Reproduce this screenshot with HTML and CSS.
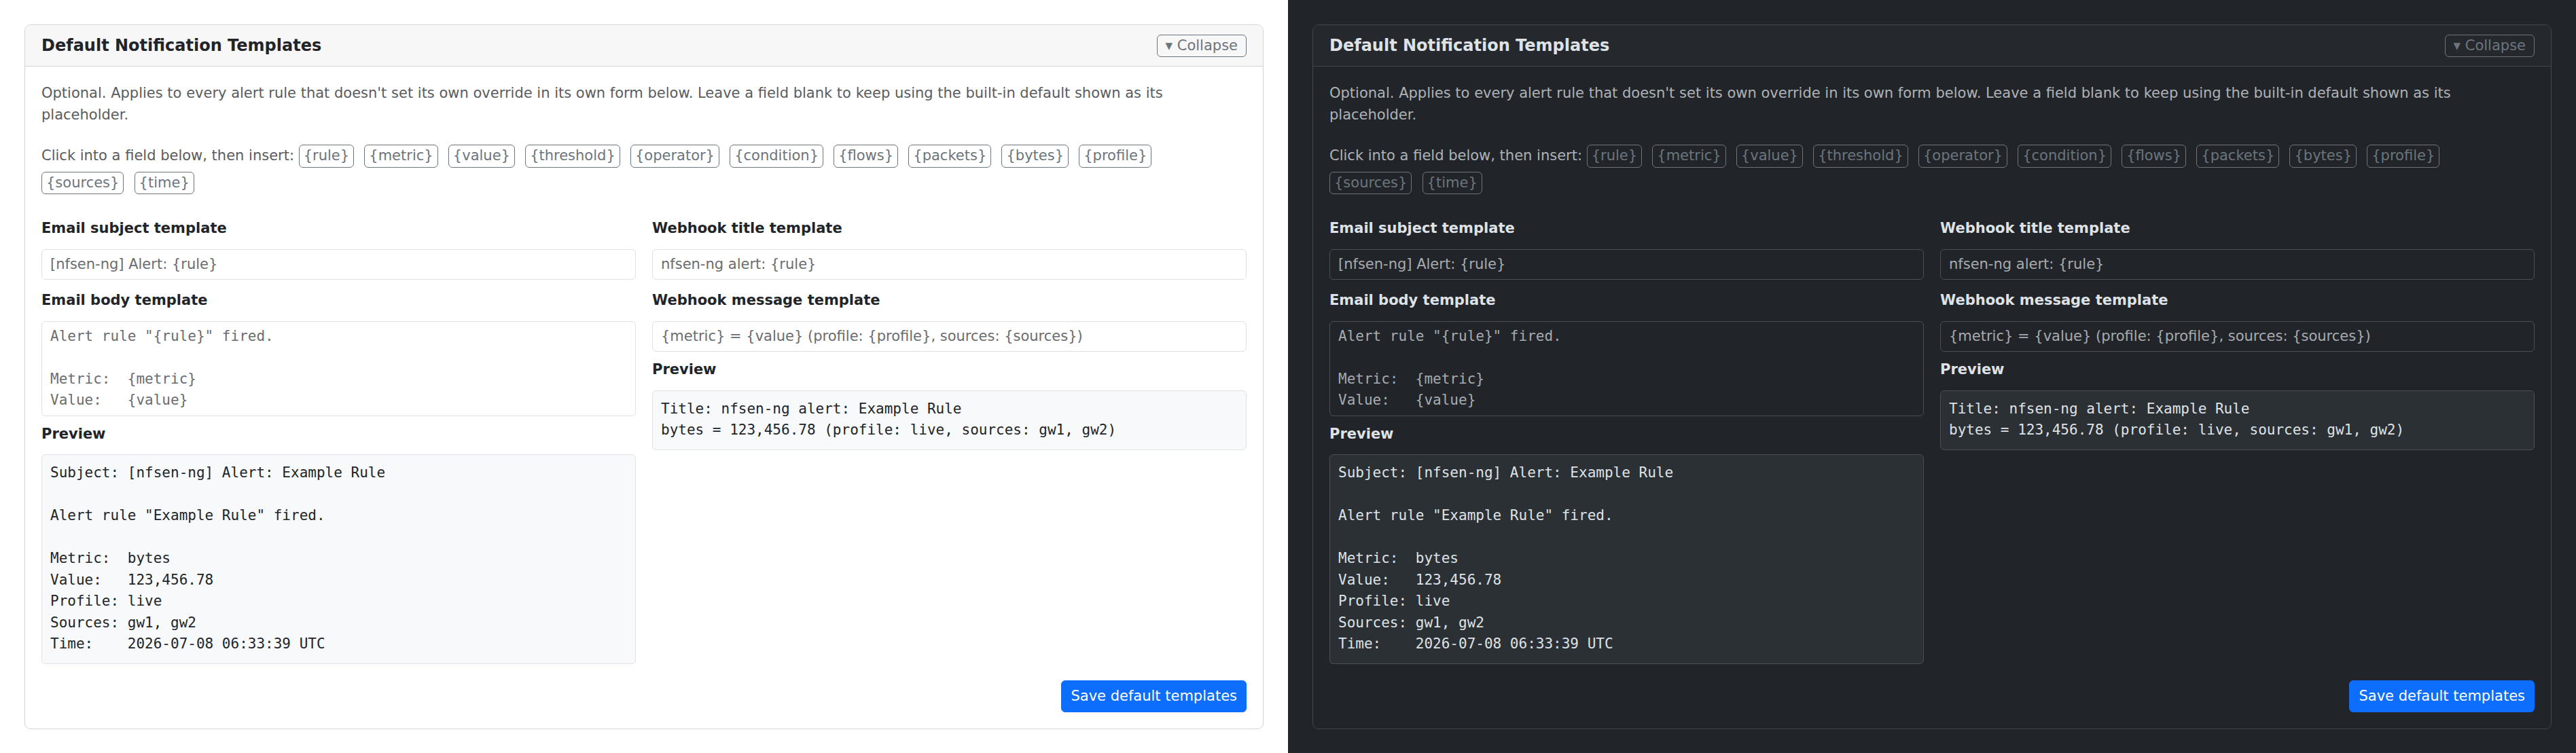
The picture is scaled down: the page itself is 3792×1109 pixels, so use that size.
FILE: index.html
```html
<!DOCTYPE html>
<html lang="en">
<head>
<meta charset="utf-8">
<title>Default Notification Templates</title>
<link rel="stylesheet" href="styles.css">
</head>
<body>
<div class="split">
  <section class="pane theme-light">
    <div class="card">
      <div class="card-header">
        <h5 class="card-title">Default Notification Templates</h5>
        <button class="btn-collapse" type="button">&#9662; Collapse</button>
      </div>
      <div class="card-body">
        <p class="intro">Optional. Applies to every alert rule that doesn't set its own override in its own form below. Leave a field blank to keep using the built-in default shown as its placeholder.</p>
        <div class="vars">Click into a field below, then insert: <button class="chip" type="button">{rule}</button> <button class="chip" type="button">{metric}</button> <button class="chip" type="button">{value}</button> <button class="chip" type="button">{threshold}</button> <button class="chip" type="button">{operator}</button> <button class="chip" type="button">{condition}</button> <button class="chip" type="button">{flows}</button> <button class="chip" type="button">{packets}</button> <button class="chip" type="button">{bytes}</button> <button class="chip" type="button">{profile}</button> <button class="chip" type="button">{sources}</button> <button class="chip" type="button">{time}</button></div>
        <div class="grid">
          <div class="col">
            <label class="label">Email subject template</label>
            <input class="control" type="text" placeholder="[nfsen-ng] Alert: {rule}">
            <label class="label">Email body template</label>
            <textarea class="control mono area" rows="4" placeholder="Alert rule &quot;{rule}&quot; fired.&#10;&#10;Metric:  {metric}&#10;Value:   {value}"></textarea>
            <div class="label label-preview">Preview</div>
            <pre class="preview">Subject: [nfsen-ng] Alert: Example Rule

Alert rule "Example Rule" fired.

Metric:  bytes
Value:   123,456.78
Profile: live
Sources: gw1, gw2
Time:    2026-07-08 06:33:39 UTC</pre>
          </div>
          <div class="col">
            <label class="label">Webhook title template</label>
            <input class="control" type="text" placeholder="nfsen-ng alert: {rule}">
            <label class="label">Webhook message template</label>
            <input class="control" type="text" placeholder="{metric} = {value} (profile: {profile}, sources: {sources})">
            <div class="label label-preview">Preview</div>
            <pre class="preview">Title: nfsen-ng alert: Example Rule
bytes = 123,456.78 (profile: live, sources: gw1, gw2)</pre>
          </div>
        </div>
        <div class="actions"><button class="btn-primary" type="button">Save default templates</button></div>
      </div>
    </div>
    <div class="card card-next"></div>
  </section>
  <section class="pane theme-dark">
    <div class="card">
      <div class="card-header">
        <h5 class="card-title">Default Notification Templates</h5>
        <button class="btn-collapse" type="button">&#9662; Collapse</button>
      </div>
      <div class="card-body">
        <p class="intro">Optional. Applies to every alert rule that doesn't set its own override in its own form below. Leave a field blank to keep using the built-in default shown as its placeholder.</p>
        <div class="vars">Click into a field below, then insert: <button class="chip" type="button">{rule}</button> <button class="chip" type="button">{metric}</button> <button class="chip" type="button">{value}</button> <button class="chip" type="button">{threshold}</button> <button class="chip" type="button">{operator}</button> <button class="chip" type="button">{condition}</button> <button class="chip" type="button">{flows}</button> <button class="chip" type="button">{packets}</button> <button class="chip" type="button">{bytes}</button> <button class="chip" type="button">{profile}</button> <button class="chip" type="button">{sources}</button> <button class="chip" type="button">{time}</button></div>
        <div class="grid">
          <div class="col">
            <label class="label">Email subject template</label>
            <input class="control" type="text" placeholder="[nfsen-ng] Alert: {rule}">
            <label class="label">Email body template</label>
            <textarea class="control mono area" rows="4" placeholder="Alert rule &quot;{rule}&quot; fired.&#10;&#10;Metric:  {metric}&#10;Value:   {value}"></textarea>
            <div class="label label-preview">Preview</div>
            <pre class="preview">Subject: [nfsen-ng] Alert: Example Rule

Alert rule "Example Rule" fired.

Metric:  bytes
Value:   123,456.78
Profile: live
Sources: gw1, gw2
Time:    2026-07-08 06:33:39 UTC</pre>
          </div>
          <div class="col">
            <label class="label">Webhook title template</label>
            <input class="control" type="text" placeholder="nfsen-ng alert: {rule}">
            <label class="label">Webhook message template</label>
            <input class="control" type="text" placeholder="{metric} = {value} (profile: {profile}, sources: {sources})">
            <div class="label label-preview">Preview</div>
            <pre class="preview">Title: nfsen-ng alert: Example Rule
bytes = 123,456.78 (profile: live, sources: gw1, gw2)</pre>
          </div>
        </div>
        <div class="actions"><button class="btn-primary" type="button">Save default templates</button></div>
      </div>
    </div>
    <div class="card card-next"></div>
  </section>
</div>
</body>
</html>
```
FILE: styles.css
```css
html, body {
  margin: 0;
  padding: 0;
  height: 100%;
  overflow: hidden;
}

body {
  font-family: "DejaVu Sans", sans-serif;
  font-size: 24px;
  line-height: 1.5;
}

.split {
  display: flex;
  width: 3792px;
  height: 1109px;
}

.theme-light {
  --bg: #ffffff;
  --text: #212529;
  --muted: #595c5f;
  --card-border: #d5d5d6;
  --cap-bg: #f7f7f7;
  --input-bg: #ffffff;
  --input-border: #dee2e6;
  --placeholder: #6a6d70;
  --preview-bg: #f8f9fa;
  --preview-border: #dee2e6;
  --chip: #6c757d;
}

.theme-dark {
  --bg: #212529;
  --text: #dee2e6;
  --muted: #aeb2b6;
  --card-border: #41464b;
  --cap-bg: #25292d;
  --input-bg: #212529;
  --input-border: #495057;
  --placeholder: #a7abaf;
  --preview-bg: #2b3035;
  --preview-border: #495057;
  --chip: #6c757d;
}

.pane {
  width: 1896px;
  flex: 0 0 1896px;
  box-sizing: border-box;
  padding: 36px 36px 0 36px;
  background: var(--bg);
  color: var(--text);
  overflow: hidden;
}

.card {
  border: 1px solid var(--card-border);
  border-radius: 9px;
  background: var(--bg);
  overflow: hidden;
}

.card-next {
  margin-top: 35px;
  height: 200px;
}

.card-header {
  display: flex;
  align-items: center;
  justify-content: space-between;
  padding: 14px 24px 13px 24px;
  background: var(--cap-bg);
  border-bottom: 1px solid var(--card-border);
}

.card-title {
  margin: 0;
  font-size: 24px;
  font-weight: 700;
  line-height: 1.2;
  color: var(--text);
}

.btn-collapse {
  font-family: "DejaVu Sans", sans-serif;
  font-size: 21px;
  line-height: 25px;
  padding: 3px 12px;
  color: var(--chip);
  background: transparent;
  border: 1px solid var(--chip);
  border-radius: 6px;
}

.card-body {
  padding: 24px 24px 24px 24px;
}

.intro {
  margin: 0 0 25px 0;
  font-size: 21px;
  line-height: 1.5;
  color: var(--muted);
}

.vars {
  font-size: 21px;
  line-height: 1.5;
  color: var(--muted);
  margin-bottom: 32px;
}

.chip {
  display: inline-block;
  font-family: "DejaVu Sans", sans-serif;
  font-size: 21px;
  line-height: 1.5;
  padding: 0 6px;
  margin: 3px 8.5px 3px 0;
  color: var(--chip);
  background: transparent;
  border: 1px solid var(--chip);
  border-radius: 6px;
  vertical-align: baseline;
}

.grid {
  display: grid;
  grid-template-columns: 1fr 1fr;
  column-gap: 24px;
  align-items: start;
}

.col {
  display: flex;
  flex-direction: column;
  min-width: 0;
}

.label {
  display: block;
  font-size: 21px;
  font-weight: 700;
  line-height: 31.5px;
  margin-bottom: 14px;
  color: var(--text);
}

.label-preview {
  margin-top: -4px;
}

.control {
  display: block;
  box-sizing: border-box;
  width: 100%;
  font-family: "DejaVu Sans", sans-serif;
  font-size: 21px;
  line-height: 1.5;
  padding: 6px 12px;
  height: 45.5px;
  margin: 0 0 15px 0;
  color: var(--text);
  background: var(--input-bg);
  border: 1px solid var(--input-border);
  border-radius: 6px;
  outline: none;
}

.control::placeholder {
  color: var(--placeholder);
  opacity: 1;
}

.mono {
  font-family: "DejaVu Sans Mono", monospace;
}

.area {
  height: 140px;
  resize: none;
  overflow: hidden;
}

.preview {
  margin: 0;
  font-family: "DejaVu Sans Mono", monospace;
  font-size: 21px;
  line-height: 1.5;
  padding: 11px 12px 12px 12px;
  background: var(--preview-bg);
  border: 1px solid var(--preview-border);
  border-radius: 6px;
  color: var(--text);
  white-space: pre;
}

.actions {
  display: flex;
  justify-content: flex-end;
  margin-top: 24px;
}

.btn-primary {
  font-family: "DejaVu Sans", sans-serif;
  font-size: 21px;
  line-height: 1.5;
  padding: 7px 13px;
  color: #ffffff;
  background: #0d6efd;
  border: 1px solid #0d6efd;
  border-radius: 6px;
}
```
